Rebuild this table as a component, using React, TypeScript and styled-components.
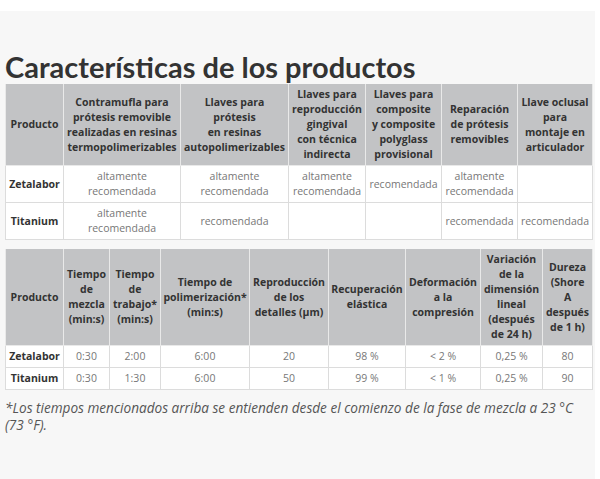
import { Fragment } from "react";
import styled, { createGlobalStyle } from "styled-components";

const GlobalStyle = createGlobalStyle`
  html, body {
    margin: 0;
    padding: 0;
    background: #ffffff;
  }
`;

const Page = styled.div({
  paddingTop: 11,
  width: 595,
  height: 468,
});

const Panel = styled.section({
  background: "#f7f7f7",
  height: "100%",
  padding: "0 8px 0 5px",
  boxSizing: "border-box",
  overflow: "hidden",
});

const Title = styled.h1({
  margin: 0,
  paddingTop: 38,
  fontFamily: "Lato, 'Open Sans', sans-serif",
  fontWeight: 700,
  fontSize: 29,
  lineHeight: "35px",
  color: "#333333",
});

const Table = styled.table<{ $gap?: number }>(({ $gap = 0 }) => ({
  width: "100%",
  tableLayout: "fixed",
  borderCollapse: "collapse",
  marginTop: $gap,
  fontFamily: "'Open Sans', sans-serif",
  fontSize: 10.5,
  lineHeight: "15px",
}));

const HeadCell = styled.th({
  background: "#c2c3c5",
  color: "#333333",
  fontWeight: 700,
  textAlign: "center",
  verticalAlign: "middle",
  padding: "3px 2px",
  border: "1px solid #e9e9e9",
  borderTop: "none",
});

const Cell = styled.td<{ $product?: boolean }>(({ $product }) => ({
  background: "#ffffff",
  color: $product ? "#333333" : "#777777",
  fontWeight: $product ? 700 : 400,
  textAlign: "center",
  verticalAlign: "middle",
  padding: "3px 2px",
  border: "1px solid #dcdcdc",
}));

const Note = styled.p({
  margin: "9px 0 0",
  fontFamily: "'Open Sans', sans-serif",
  fontStyle: "italic",
  fontSize: 13.6,
  lineHeight: "17px",
  color: "#555555",
});

const lines = (text: string) =>
  text.split("\n").map((part, i) => (
    <Fragment key={i}>
      {i > 0 && <br />}
      {part}
    </Fragment>
  ));

const usage = {
  widths: [58, 117, 108, 77, 76, 76, 75],
  head: [
    "Producto",
    "Contramufla para\nprótesis removible\nrealizadas en resinas\ntermopolimerizables",
    "Llaves para\nprótesis\nen resinas\nautopolimerizables",
    "Llaves para\nreproducción\ngingival\ncon técnica\nindirecta",
    "Llaves para\ncomposite\ny composite\npolyglass\nprovisional",
    "Reparación\nde prótesis\nremovibles",
    "Llave oclusal\npara\nmontaje en\narticulador",
  ],
  rows: [
    [
      "Zetalabor",
      "altamente\nrecomendada",
      "altamente\nrecomendada",
      "altamente\nrecomendada",
      "recomendada",
      "altamente\nrecomendada",
      "",
    ],
    [
      "Titanium",
      "altamente\nrecomendada",
      "recomendada",
      "",
      "",
      "recomendada",
      "recomendada",
    ],
  ],
};

const specs = {
  widths: [58, 46, 51, 89, 79, 77, 75, 62, 50],
  head: [
    "Producto",
    "Tiempo\nde\nmezcla\n(min:s)",
    "Tiempo\nde\ntrabajo*\n(min:s)",
    "Tiempo de\npolimerización*\n(min:s)",
    "Reproducción\nde los\ndetalles (µm)",
    "Recuperación\nelástica",
    "Deformación\na la\ncompresión",
    "Variación\nde la\ndimensión\nlineal\n(después\nde 24 h)",
    "Dureza\n(Shore\nA\ndespués\nde 1 h)",
  ],
  rows: [
    ["Zetalabor", "0:30", "2:00", "6:00", "20", "98 %", "< 2 %", "0,25 %", "80"],
    ["Titanium", "0:30", "1:30", "6:00", "50", "99 %", "< 1 %", "0,25 %", "90"],
  ],
};

type Data = { widths: number[]; head: string[]; rows: string[][] };

function DataTable({ data, gap }: { data: Data; gap?: number }) {
  return (
    <Table $gap={gap}>
      <colgroup>
        {data.widths.map((w, i) => (
          <col key={i} style={{ width: w }} />
        ))}
      </colgroup>
      <thead>
        <tr>
          {data.head.map((h, i) => (
            <HeadCell key={i}>{lines(h)}</HeadCell>
          ))}
        </tr>
      </thead>
      <tbody>
        {data.rows.map((row, r) => (
          <tr key={r}>
            {row.map((c, i) => (
              <Cell key={i} $product={i === 0}>
                {lines(c)}
              </Cell>
            ))}
          </tr>
        ))}
      </tbody>
    </Table>
  );
}

export default function App() {
  return (
    <>
      <GlobalStyle />
      <Page>
        <Panel>
          <Title>Características de los productos</Title>
          <DataTable data={usage} />
          <DataTable data={specs} gap={9} />
          <Note>
            *Los tiempos mencionados arriba se entienden desde el comienzo de la
            fase de mezcla a 23 °C (73&nbsp;°F).
          </Note>
        </Panel>
      </Page>
    </>
  );
}
